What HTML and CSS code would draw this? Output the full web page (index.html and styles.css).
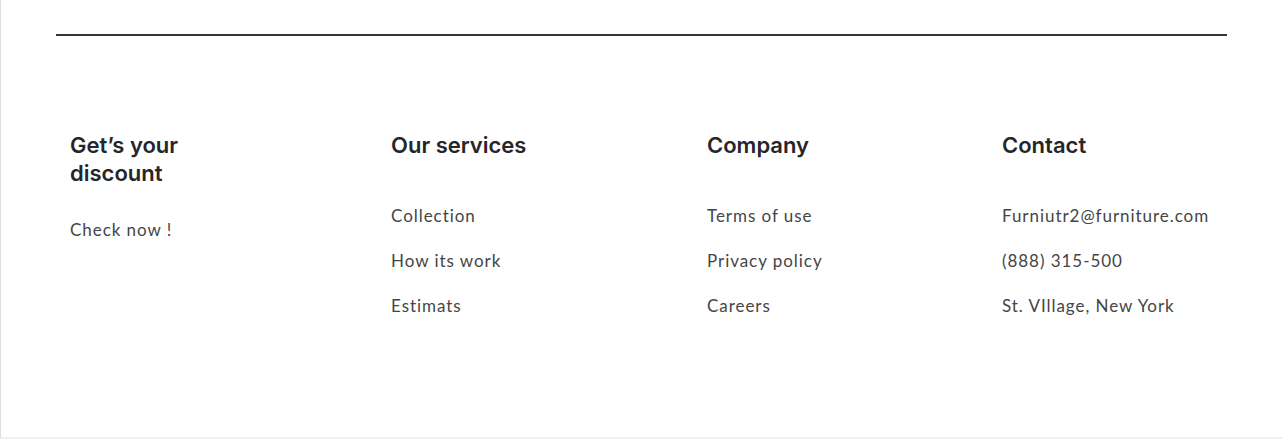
FILE: index.html
```html
<!DOCTYPE html>
<html lang="en">

<head>
  <meta charset="UTF-8">
  <meta name="viewport" content="width=device-width, initial-scale=1.0">
  <title>Footer</title>
  <link rel="stylesheet" href="styles.css">
</head>

<body>
  <div class="page">
    <hr class="rule">
    <footer class="footer">
      <div class="col col-discount">
        <h3>Get’s your discount</h3>
        <p class="check">Check now !</p>
      </div>
      <div class="col col-services">
        <h3>Our services</h3>
        <ul>
          <li>Collection</li>
          <li>How its work</li>
          <li>Estimats</li>
        </ul>
      </div>
      <div class="col col-company">
        <h3>Company</h3>
        <ul>
          <li>Terms of use</li>
          <li>Privacy policy</li>
          <li>Careers</li>
        </ul>
      </div>
      <div class="col col-contact">
        <h3>Contact</h3>
        <ul>
          <li>Furniutr2@furniture.com</li>
          <li>(888) 315-500</li>
          <li>St. VIllage, New York</li>
        </ul>
      </div>
    </footer>
  </div>
</body>

</html>
```

FILE: styles.css
```css
body {
  margin: 0;
  padding: 0;
  background-color: #fff;
  font-family: Lato, "Open Sans", sans-serif;
}

.page {
  box-sizing: border-box;
  height: 439px;
  padding: 34px 55px 0;
  border-left: 1px solid #dedede;
  border-bottom: 2px solid #eeeff1;
}

.rule {
  margin: 0;
  border: none;
  height: 2px;
  background-color: #333;
}

.footer {
  display: flex;
  margin-top: 95px;
  padding: 0 14px;
}

.col-discount {
  width: 321px;
}

.col-services {
  width: 316px;
}

.col-company {
  width: 295px;
}

.col-contact {
  flex: 1;
}

.col h3 {
  margin: 0;
  font-family: Inter, sans-serif;
  font-size: 22px;
  font-weight: 600;
  line-height: 28px;
  color: #26262a;
}

.col-discount h3 {
  max-width: 150px;
}

.check {
  margin: 31px 0 0;
}

.col ul {
  list-style: none;
  margin: 45px 0 0;
  padding: 0;
}

.col li {
  margin-bottom: 21px;
}

.check,
.col li {
  font-size: 17px;
  font-weight: 400;
  line-height: 24px;
  letter-spacing: 0.95px;
  color: #454545;
}
```
